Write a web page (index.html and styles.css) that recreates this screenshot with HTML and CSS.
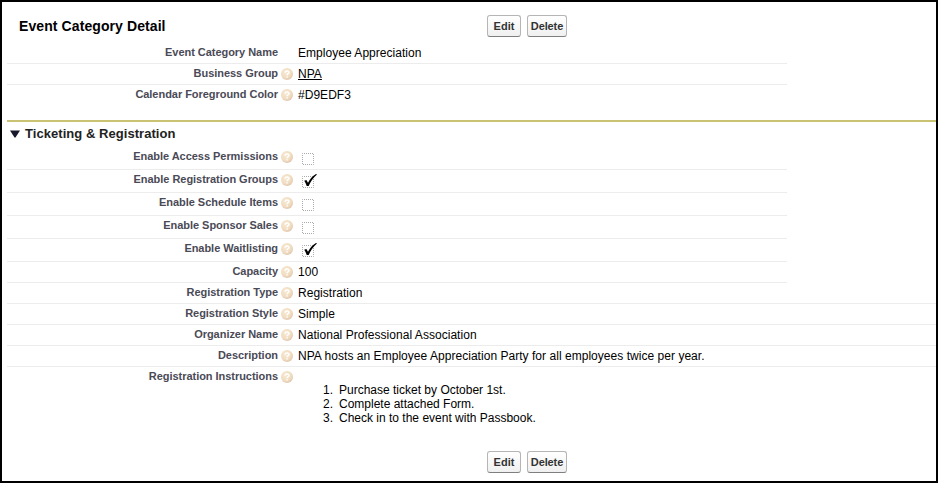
FILE: index.html
```html
<!DOCTYPE html>
<html lang="en">
<head>
<meta charset="utf-8">
<title>Event Category Detail</title>
<link rel="stylesheet" href="styles.css">
</head>
<body>
<svg width="0" height="0" class="defs">
  <defs>
    <radialGradient id="orb" cx=".4" cy=".35" r=".7"><stop offset="0" stop-color="#f8ead3"/><stop offset=".65" stop-color="#f0dcc0"/><stop offset="1" stop-color="#dfc4ae"/></radialGradient>
    <symbol id="help" viewBox="0 0 12 12"><circle cx="6" cy="6" r="6" fill="url(#orb)"/><path d="M4 4.6C4.1 2.4 8 2.4 8 4.5C8 5.8 6.1 5.7 6.1 7.2M6.1 8.3V9.6" fill="none" stroke="#fff" stroke-width="1.5"/></symbol>
    <symbol id="box" viewBox="0 0 16 16"><rect x="1.5" y="4.5" width="11" height="11" fill="none" stroke="#aaa" stroke-dasharray="1 1" stroke-dashoffset=".5"/></symbol>
    <symbol id="tick" viewBox="0 0 16 16"><path d="M3.2 8.8L5.4 8L7 10.8C8.8 7.4 11.4 4 15 2L16 2.5C12.3 5.5 9.6 9.4 7.7 14H5.7C5 12 4.4 10.4 3.2 8.8Z" fill="#000"/></symbol>
  </defs>
</svg>
<main class="page">
  <header class="head"><h1>Event Category Detail</h1><div class="buttons"><button>Edit</button><button>Delete</button></div></header>
  <section class="summary">
    <div class="row"><span class="label">Event Category Name</span><i class="help"></i><span class="value">Employee Appreciation</span></div>
    <div class="row"><span class="label">Business Group</span><svg class="help"><use href="#help"/></svg><span class="value"><a href="#">NPA</a></span></div>
    <div class="row last"><span class="label">Calendar Foreground Color</span><svg class="help"><use href="#help"/></svg><span class="value">#D9EDF3</span></div>
  </section>
  <section class="registration">
    <h2><svg class="arrow" viewBox="0 0 10 8"><path d="M0 .5H10L5.5 7.5H4.5Z" fill="#18182c"/></svg><span>Ticketing &amp; Registration</span></h2>
    <div class="row check"><span class="label">Enable Access Permissions</span><svg class="help"><use href="#help"/></svg><svg class="box"><use href="#box"/></svg></div>
    <div class="row check"><span class="label">Enable Registration Groups</span><svg class="help"><use href="#help"/></svg><svg class="box"><use href="#box"/><use href="#tick"/></svg></div>
    <div class="row check"><span class="label">Enable Schedule Items</span><svg class="help"><use href="#help"/></svg><svg class="box"><use href="#box"/></svg></div>
    <div class="row check"><span class="label">Enable Sponsor Sales</span><svg class="help"><use href="#help"/></svg><svg class="box"><use href="#box"/></svg></div>
    <div class="row check"><span class="label">Enable Waitlisting</span><svg class="help"><use href="#help"/></svg><svg class="box"><use href="#box"/><use href="#tick"/></svg></div>
    <div class="row"><span class="label">Capacity</span><svg class="help"><use href="#help"/></svg><span class="value">100</span></div>
    <div class="row wide"><span class="label">Registration Type</span><svg class="help"><use href="#help"/></svg><span class="value">Registration</span></div>
    <div class="row wide"><span class="label">Registration Style</span><svg class="help"><use href="#help"/></svg><span class="value">Simple</span></div>
    <div class="row wide"><span class="label">Organizer Name</span><svg class="help"><use href="#help"/></svg><span class="value">National Professional Association</span></div>
    <div class="row wide"><span class="label">Description</span><svg class="help"><use href="#help"/></svg><span class="value">NPA hosts an Employee Appreciation Party for all employees twice per year.</span></div>
    <div class="row wide instructions"><span class="label">Registration Instructions</span><svg class="help"><use href="#help"/></svg>
      <ol><li>Purchase ticket by October 1st.</li><li>Complete attached Form.</li><li>Check in to the event with Passbook.</li></ol></div>
  </section>
  <footer class="buttons"><button>Edit</button><button>Delete</button></footer>
</main>
</body>
</html>
```
FILE: styles.css
```css
* { box-sizing: border-box; }
body { margin: 0; background: #fff; font-family: "Liberation Sans", Arial, sans-serif; font-size: 12px; color: #000; }
.defs { display: block; }
.page { height: 483px; border: 2px solid #000; padding-left: 5px; overflow: hidden; }
.head { display: flex; height: 41px; padding: 13px 0 0 12px; }
h1 { width: 468px; margin: 2px 0 0; font-size: 14px; line-height: 18px; letter-spacing: .09px; }
.buttons { display: flex; gap: 6px; }
button { width: 34px; height: 22px; padding: 0; border: 1px solid #b5b5b5; border-bottom-color: #7f7f7f; border-radius: 3px; background: linear-gradient(#fff, #f0f0f0); font: bold 11px/20px "Liberation Sans", Arial, sans-serif; color: #333; }
button + button { width: 40px; letter-spacing: -.1px; }
.summary { height: 77px; }
.row { display: flex; align-items: flex-start; width: 780px; height: 21px; border-bottom: 1px solid #ececec; }
.row.last { border-bottom: 0; }
.row.wide { width: auto; }
/* The rule below "Registration Type" is the first to span the page. */
.row.check { height: 23px; }
.label { width: 271px; padding-top: 2px; text-align: right; font-weight: bold; font-size: 11px; line-height: 14px; letter-spacing: -.04px; color: #4a4a56; white-space: nowrap; }
.help { width: 12px; height: 12px; margin: 4px 5px 0 3px; flex: none; }
.value { padding-top: 3px; line-height: 14px; letter-spacing: .035px; white-space: nowrap; }
a { color: #000; }
.box { width: 16px; height: 16px; margin: 2px 0 0 3px; overflow: visible; }
.registration { height: 329px; border-top: 2px solid #c9c272; }
h2 { display: flex; align-items: center; gap: 5px; height: 25px; margin: 0; padding: 0 0 2px 3px; font-size: 13px; line-height: 16px; letter-spacing: .05px; color: #222; }
.arrow { width: 10px; height: 8px; }
.row.instructions { height: auto; border: 0; }
ol { margin: 16px 0 0; padding-left: 25px; line-height: 14px; list-style: none; counter-reset: step; }
li { display: flex; counter-increment: step; }
li::before { content: counter(step) "."; width: 16px; }
footer.buttons { padding-left: 480px; margin-top: 2px; }
```
